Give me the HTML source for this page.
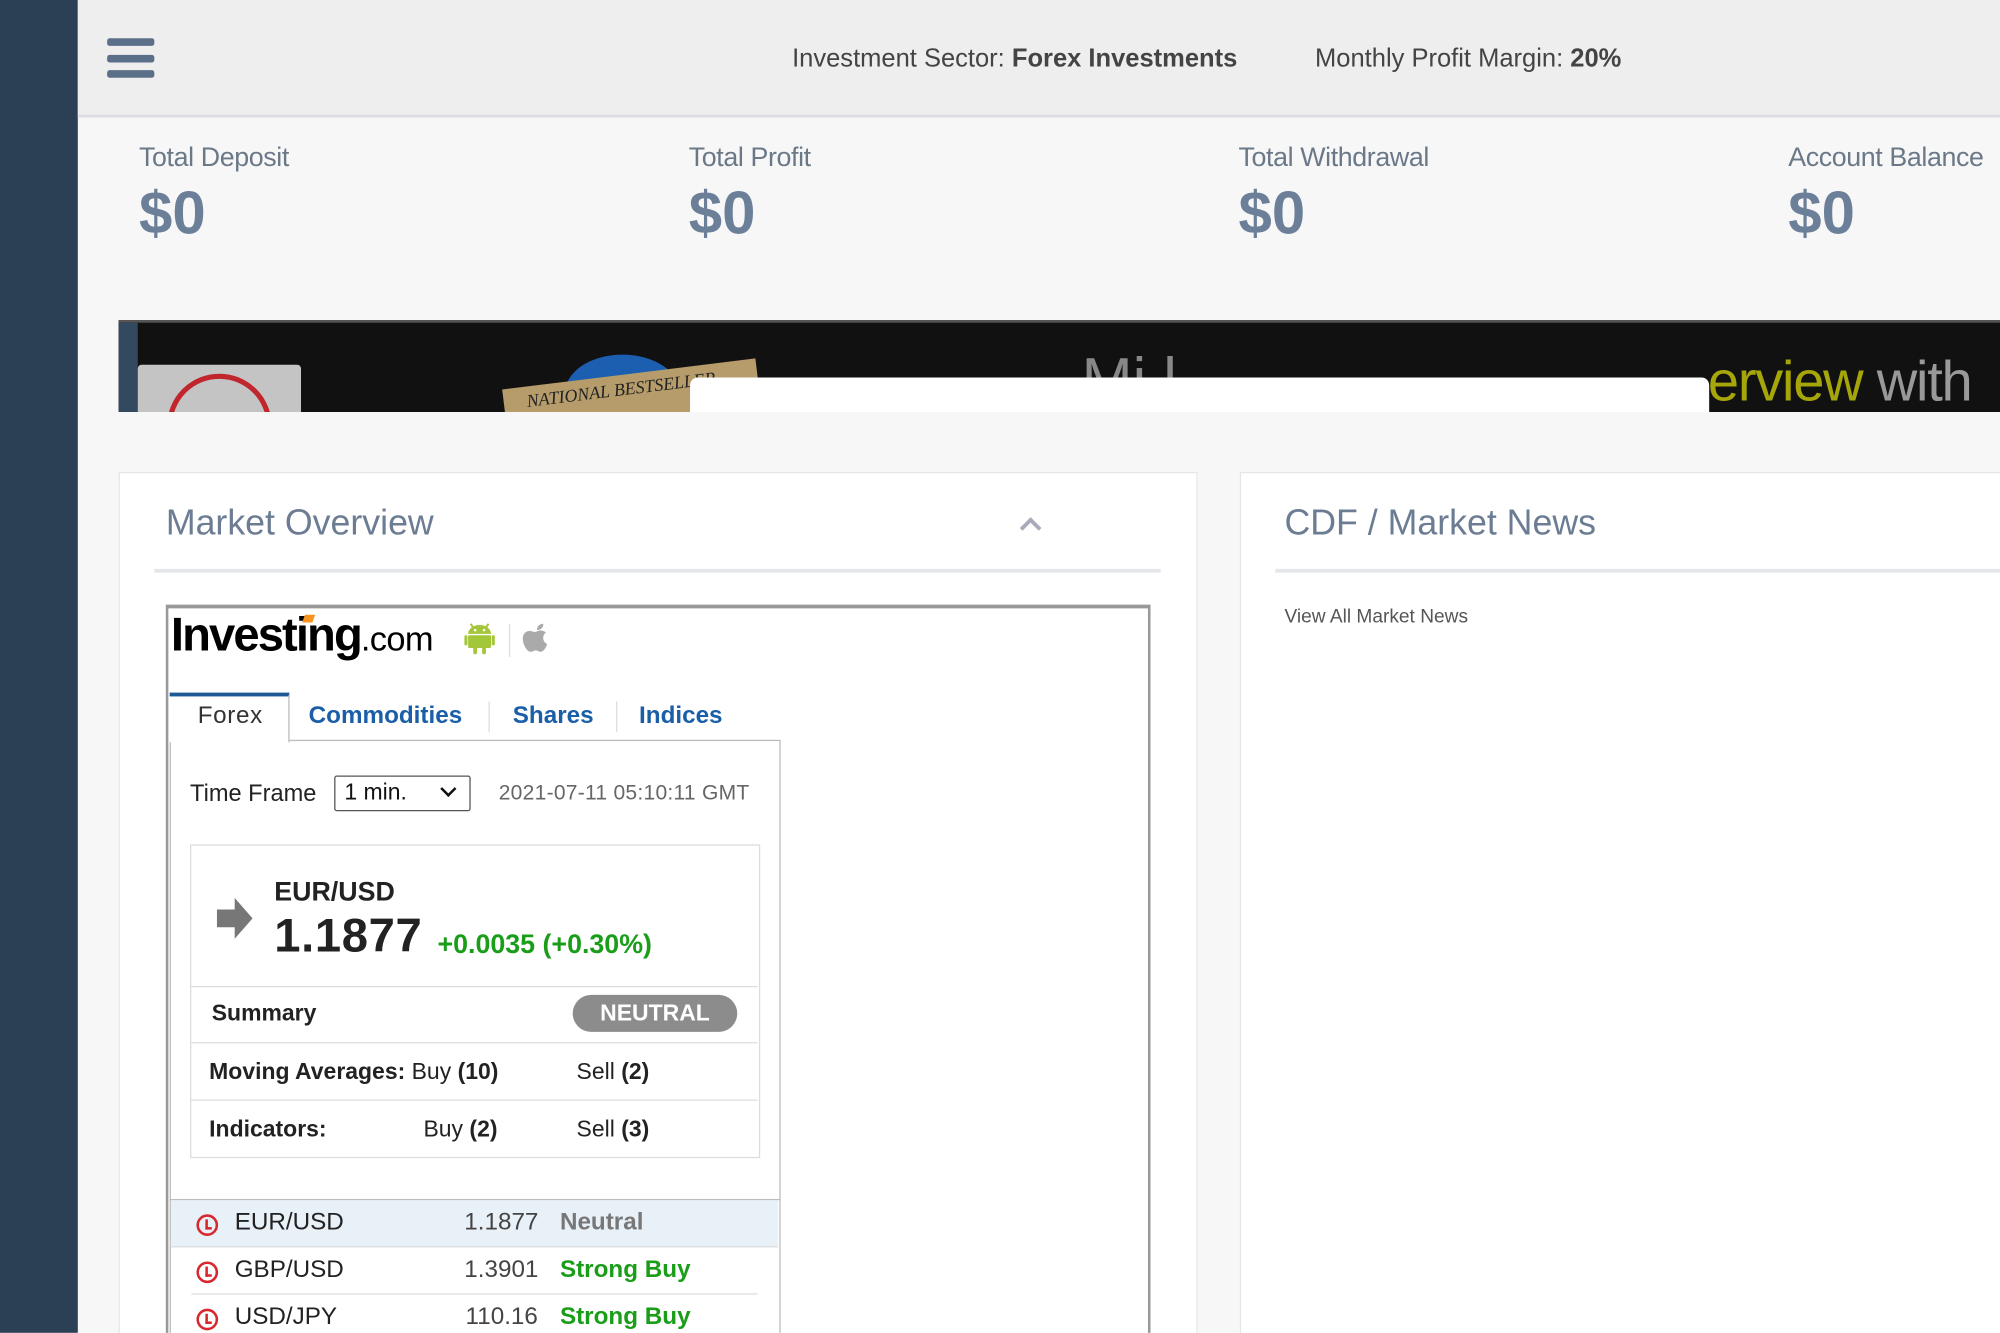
<!DOCTYPE html>
<html><head><meta charset="utf-8"><style>
*{margin:0;padding:0;box-sizing:border-box}
html,body{width:2000px;height:1333px;overflow:hidden;background:#f7f7f7;font-family:"Liberation Sans",Arial,sans-serif}
#s{position:absolute;left:0;top:0;width:1568px;height:1045px;transform:scale(1.27551);transform-origin:0 0;background:#f7f7f7;overflow:hidden}
.a{position:absolute;white-space:nowrap}
.lab{font-size:21px;color:#6b7888;top:112px;letter-spacing:-0.3px}
.val{font-size:47px;font-weight:bold;color:#6c7f99;top:139px}
.tab{font-size:19px;font-weight:bold;color:#1a5ea8;top:551px}
.row{position:absolute;left:150px;width:444px;border-top:1px solid #ddd;font-size:18px;color:#222}
.li{position:absolute;left:134px;width:476px;height:37px;font-size:19px;color:#222}
.clk{position:absolute;left:20px;top:11px;width:17px;height:17px;border:2.5px solid #d9272e;border-radius:50%}
.clk:after{content:"";position:absolute;left:5px;top:2px;width:3px;height:6px;border-left:2px solid #d9272e;border-bottom:2px solid #d9272e}
</style></head><body><div id="s">
<div class="a" style="left:0;top:0;width:61px;height:1045px;background:#2b3f55"></div>
<div class="a" style="left:61px;top:0;width:1507px;height:92px;background:#eeeeee;border-bottom:2px solid #dcdde3"></div>
<div class="a" style="left:84px;top:30px;width:37px;height:6px;background:#5b6f89;border-radius:2px"></div>
<div class="a" style="left:84px;top:43px;width:37px;height:6px;background:#5b6f89;border-radius:2px"></div>
<div class="a" style="left:84px;top:55px;width:37px;height:6px;background:#5b6f89;border-radius:2px"></div>
<div class="a" style="left:621px;top:35px;font-size:20px;color:#444">Investment Sector: <b>Forex Investments</b></div>
<div class="a" style="left:1031px;top:35px;font-size:20px;color:#444">Monthly Profit Margin: <b>20%</b></div>

<div class="a lab" style="left:109px">Total Deposit</div>
<div class="a lab" style="left:540px">Total Profit</div>
<div class="a lab" style="left:971px">Total Withdrawal</div>
<div class="a lab" style="left:1402px">Account Balance</div>
<div class="a val" style="left:109px">$0</div>
<div class="a val" style="left:540px">$0</div>
<div class="a val" style="left:971px">$0</div>
<div class="a val" style="left:1402px">$0</div>

<div class="a" style="left:93px;top:251px;width:1475px;height:72px;background:#111;border-top:2px solid #555;overflow:hidden">
 <div class="a" style="left:0;top:0;width:15px;height:72px;background:#33495f"></div>
 <div class="a" style="left:15px;top:33px;width:128px;height:45px;background:#c4c4c4;border-radius:3px"></div>
 <div class="a" style="left:38px;top:40px;width:82px;height:82px;border:4px solid #c0262c;border-radius:50%"></div>
 <div class="a" style="left:350px;top:25px;width:90px;height:60px;background:#1c5eb0;border-radius:50%"></div>
 <div class="a" style="left:303px;top:40px;width:200px;height:50px;background:#b59c6a;transform:rotate(-7deg);font:italic 14px 'Liberation Serif',serif;color:#222;padding:5px 18px">NATIONAL BESTSELLER</div>
 <div class="a" style="left:755px;top:18px;font-size:48px;color:#888">Mi   l</div>
 <div class="a" style="left:448px;top:43px;width:799px;height:40px;background:#fff;border-radius:6px 6px 0 0"></div>
 <div class="a" style="left:1246px;top:22px;font-size:44px;color:#a6a60a;letter-spacing:-1px">erview <span style="color:#999">with</span></div>
</div>

<div class="a" style="left:93px;top:370px;width:846px;height:700px;background:#fff;border:1px solid #e6e6e6"></div>
<div class="a" style="left:130px;top:394px;font-size:28px;color:#6b7c93">Market Overview</div>
<div class="a" style="left:802px;top:408px;width:12px;height:12px;border-left:3px solid #aab;border-top:3px solid #aab;transform:rotate(45deg)"></div>
<div class="a" style="left:121px;top:446px;width:789px;height:3px;background:#e3e6ea"></div>

<div class="a" style="left:972px;top:370px;width:620px;height:700px;background:#fff;border:1px solid #e6e6e6"></div>
<div class="a" style="left:1007px;top:394px;font-size:28px;color:#6b7c93">CDF / Market News</div>
<div class="a" style="left:1000px;top:446px;width:600px;height:3px;background:#e3e6ea"></div>
<div class="a" style="left:1007px;top:475px;font-size:15px;color:#555">View All Market News</div>

<div class="a" style="left:130px;top:474px;width:772px;height:600px;background:#fff;border:2px solid #999;border-top:3px solid #999"></div>
<div class="a" style="left:134px;top:477px;font-size:37px;font-weight:bold;color:#000;letter-spacing:-1.5px">Investing<span style="font-size:27px;font-weight:normal;letter-spacing:-0.5px">.com</span></div>
<div class="a" style="left:238px;top:482px;width:8px;height:6px;background:#f7931e;transform:skew(-20deg)"></div>
<svg class="a" style="left:364px;top:486px" width="24" height="28" viewBox="0 0 24 28"><path d="M5 3l2 3M19 3l-2 3" stroke="#a4c639" stroke-width="1.5"/><path d="M3 11a9 7 0 0 1 18 0z" fill="#a4c639"/><rect x="3" y="12" width="18" height="10" rx="1" fill="#a4c639"/><rect x="0" y="12" width="2.5" height="8" rx="1.2" fill="#a4c639"/><rect x="21.5" y="12" width="2.5" height="8" rx="1.2" fill="#a4c639"/><rect x="7" y="21" width="3" height="6" rx="1.5" fill="#a4c639"/><rect x="14" y="21" width="3" height="6" rx="1.5" fill="#a4c639"/><circle cx="8.5" cy="8" r="1" fill="#fff"/><circle cx="15.5" cy="8" r="1" fill="#fff"/></svg>
<div class="a" style="left:399px;top:489px;width:1px;height:26px;background:#ddd"></div>
<svg class="a" style="left:409px;top:486px" width="24" height="28" viewBox="0 0 24 28"><path d="M12 9c2-1 5-1 7 1-3 2-3 7 1 9-1 3-3 6-5 6-2 0-2-1-4-1s-2 1-4 1c-3 0-7-7-6-12 1-4 5-5 7-4 1 0 2 1 4 0z" fill="#aaa"/><path d="M12 8c0-3 2-5 5-5 0 3-2 5-5 5z" fill="#aaa"/></svg>

<div class="a" style="left:133px;top:580px;width:479px;height:500px;border:1px solid #bbb;border-top:1px solid #bbb"></div>
<div class="a" style="left:133px;top:543px;width:94px;height:39px;background:#fff;border-top:3px solid #1d5a96;border-right:1px solid #bbb"></div>
<div class="a tab" style="left:155px;color:#333;font-weight:normal;letter-spacing:0.5px">Forex</div>
<div class="a tab" style="left:242px">Commodities</div>
<div class="a" style="left:383px;top:550px;width:1px;height:24px;background:#ddd"></div>
<div class="a tab" style="left:402px">Shares</div>
<div class="a" style="left:483px;top:550px;width:1px;height:24px;background:#ddd"></div>
<div class="a tab" style="left:501px">Indices</div>

<div class="a" style="left:149px;top:611px;font-size:18.5px;color:#222">Time Frame</div>
<div class="a" style="left:262px;top:608px;width:107px;height:28px;border:1.5px solid #555;border-radius:2px;font-size:18px;color:#111;padding:2px 7px">1 min.</div>
<div class="a" style="left:347px;top:614px;width:9px;height:9px;border-right:2.5px solid #111;border-bottom:2.5px solid #111;transform:rotate(45deg)"></div>
<div class="a" style="left:391px;top:613px;font-size:16.5px;color:#666;letter-spacing:0.2px">2021-07-11 05:10:11 GMT</div>

<div class="a" style="left:149px;top:662px;width:447px;height:246px;border:1.5px solid #ddd"></div>
<svg class="a" style="left:170px;top:704px" width="30" height="32" viewBox="0 0 30 32"><path d="M0 9h14V0l14 16-14 16v-9H0z" fill="#777"/></svg>
<div class="a" style="left:215px;top:688px;font-size:21px;font-weight:bold;color:#222">EUR/USD</div>
<div class="a" style="left:215px;top:713px;font-size:37px;font-weight:bold;color:#222;letter-spacing:0.5px">1.1877</div>
<div class="a" style="left:343px;top:729px;font-size:21px;font-weight:bold;color:#1a9e1a">+0.0035 (+0.30%)</div>
<div class="row" style="top:773px;height:44px"><span class="a" style="left:16px;top:10px;font-weight:bold">Summary</span><span class="a" style="left:299px;top:6px;width:129px;height:29px;background:#8c8c8c;border-radius:15px;color:#fff;font-weight:bold;text-align:center;line-height:29px">NEUTRAL</span></div>
<div class="row" style="top:817px;height:45px"><span class="a" style="left:14px;top:12px"><b>Moving Averages:</b> Buy <b>(10)</b></span><span class="a" style="left:302px;top:12px">Sell <b>(2)</b></span></div>
<div class="row" style="top:862px;height:45px"><span class="a" style="left:14px;top:12px"><b>Indicators:</b></span><span class="a" style="left:182px;top:12px">Buy <b>(2)</b></span><span class="a" style="left:302px;top:12px">Sell <b>(3)</b></span></div>

<div class="a" style="left:133px;top:940px;width:479px;height:1px;background:#bbb"></div>
<div class="li" style="top:941px;background:#e8f0f8;border-bottom:1px solid #ddd"><div class="clk"></div><span class="a" style="left:50px;top:7px">EUR/USD</span><span class="a" style="left:230px;top:7px;color:#444">1.1877</span><span class="a" style="left:305px;top:7px;color:#777;font-weight:bold">Neutral</span></div>
<div class="li" style="top:978px"><div class="clk"></div><span class="a" style="left:50px;top:7px">GBP/USD</span><span class="a" style="left:230px;top:7px;color:#444">1.3901</span><span class="a" style="left:305px;top:7px;color:#1a9e1a;font-weight:bold">Strong Buy</span></div>
<div class="a" style="left:150px;top:1014px;width:444px;height:1px;background:#ddd"></div>
<div class="li" style="top:1015px"><div class="clk"></div><span class="a" style="left:50px;top:7px">USD/JPY</span><span class="a" style="left:231px;top:7px;color:#444">110.16</span><span class="a" style="left:305px;top:7px;color:#1a9e1a;font-weight:bold">Strong Buy</span></div>
</div></body></html>
